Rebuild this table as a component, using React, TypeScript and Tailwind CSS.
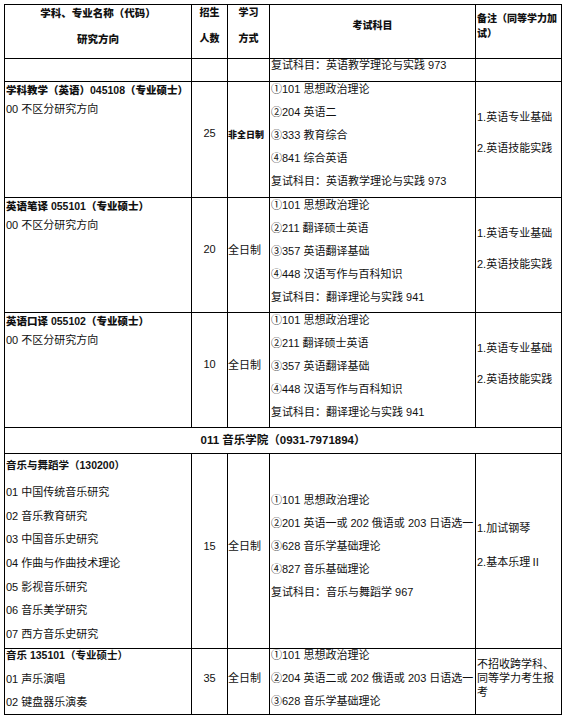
import React from 'react';

type Program = {
  title: string;
  count: string;
  mode: string;
  part: boolean;
  exams: string[];
  notes: string[];
};

const english: Program[] = [
  {
    title: '学科教学（英语）045108（专业硕士）',
    count: '25',
    mode: '非全日制',
    part: true,
    exams: ['①101 思想政治理论', '②204 英语二', '③333 教育综合', '④841 综合英语', '复试科目：英语教学理论与实践 973'],
    notes: ['1.英语专业基础', '2.英语技能实践'],
  },
  {
    title: '英语笔译 055101（专业硕士）',
    count: '20',
    mode: '全日制',
    part: false,
    exams: ['①101 思想政治理论', '②211 翻译硕士英语', '③357 英语翻译基础', '④448 汉语写作与百科知识', '复试科目：翻译理论与实践 941'],
    notes: ['1.英语专业基础', '2.英语技能实践'],
  },
  {
    title: '英语口译 055102（专业硕士）',
    count: '10',
    mode: '全日制',
    part: false,
    exams: ['①101 思想政治理论', '②211 翻译硕士英语', '③357 英语翻译基础', '④448 汉语写作与百科知识', '复试科目：翻译理论与实践 941'],
    notes: ['1.英语专业基础', '2.英语技能实践'],
  },
];

const musicDirections = [
  '01 中国传统音乐研究',
  '02 音乐教育研究',
  '03 中国音乐史研究',
  '04 作曲与作曲技术理论',
  '05 影视音乐研究',
  '06 音乐美学研究',
  '07 西方音乐史研究',
];

function ProgramRow({ p }: { p: Program }) {
  return (
    <>
      <div className="bg-white pl-[1px]">
        <div className="text-[10.5px] font-black leading-[16px] whitespace-nowrap">{p.title}</div>
        <div className="mt-[3px] text-[11px] leading-[16px]">00 不区分研究方向</div>
      </div>
      <div className="bg-white pt-[43px] text-center text-[11px] leading-[16px]">{p.count}</div>
      <div className="bg-white pt-[43px] leading-[16px] whitespace-nowrap">
        {p.part ? <span className="text-[9px] font-black">{p.mode}</span> : <span className="text-[11px]">{p.mode}</span>}
      </div>
      <div className="flex flex-col gap-[9px] bg-white pl-[1px] text-[11px] leading-[14px] whitespace-nowrap">
        {p.exams.map((e) => (
          <div key={e}>{e}</div>
        ))}
      </div>
      <div className="flex flex-col gap-[15px] bg-white pl-[1px] pt-[27px] text-[11px] leading-[16px]">
        {p.notes.map((n) => (
          <div key={n}>{n}</div>
        ))}
      </div>
    </>
  );
}

export default function App() {
  return (
    <div className="min-h-screen bg-white pl-[4px] pt-[4px] font-[family-name:Liberation_Sans,Noto_Sans_CJK_SC,sans-serif] text-[#111]">
      <div className="grid w-fit grid-cols-[186px_35px_41px_205px_85px] grid-rows-[53px_22px_115px_114px_114px_25px_194px_65px] gap-px bg-black p-px">
        {/* header */}
        <div className="flex flex-col items-center gap-[10px] bg-white text-[10.5px] font-black leading-[16px]">
          <div>学科、专业名称（代码）</div>
          <div>研究方向</div>
        </div>
        <div className="flex flex-col items-center gap-[10px] bg-white text-[10px] font-black leading-[16px]">
          <div>招生</div>
          <div>人数</div>
        </div>
        <div className="flex flex-col items-center gap-[10px] bg-white text-[10px] font-black leading-[16px]">
          <div>学习</div>
          <div>方式</div>
        </div>
        <div className="bg-white pt-[13px] text-center text-[10px] font-black leading-[16px]">考试科目</div>
        <div className="bg-white pl-[1px] pt-[6px] text-[10px] font-black leading-[15px]">
          <div>备注（同等学力加</div>
          <div>试）</div>
        </div>

        {/* continued row */}
        <div className="bg-white" />
        <div className="bg-white" />
        <div className="bg-white" />
        <div className="bg-white pl-[1px] text-[11px] leading-[12px] whitespace-nowrap">复试科目：英语教学理论与实践 973</div>
        <div className="bg-white" />

        {english.map((p) => (
          <ProgramRow key={p.title} p={p} />
        ))}

        {/* college heading */}
        <div className="col-span-5 flex items-center justify-center bg-white text-[11.5px] font-bold">
          011 音乐学院（0931-7971894）
        </div>

        {/* 音乐与舞蹈学 */}
        <div className="bg-white pl-[1px] pt-[3px]">
          <div className="text-[10.5px] font-bold leading-[16px]">音乐与舞蹈学（130200）</div>
          <div className="mt-[11px] flex flex-col gap-[7.67px] text-[11px] leading-[16px]">
            {musicDirections.map((d) => (
              <div key={d}>{d}</div>
            ))}
          </div>
        </div>
        <div className="bg-white pt-[84px] text-center text-[11px] leading-[16px]">15</div>
        <div className="bg-white pt-[84px] text-[11px] leading-[16px]">全日制</div>
        <div className="flex flex-col gap-[9px] bg-white pl-[1px] pt-[39px] text-[11px] leading-[14px] whitespace-nowrap">
          <div>①101 思想政治理论</div>
          <div>②201 英语一或 202 俄语或 203 日语选一</div>
          <div>③628 音乐学基础理论</div>
          <div>④827 音乐基础理论</div>
          <div>复试科目：音乐与舞蹈学 967</div>
        </div>
        <div className="flex flex-col gap-[18px] bg-white pl-[1px] pt-[66px] text-[11px] leading-[16px]">
          <div>1.加试钢琴</div>
          <div>2.基本乐理Ⅱ</div>
        </div>

        {/* 音乐 专业硕士 */}
        <div className="flex flex-col gap-[11.5px] bg-white pl-[1px]">
          <div className="text-[10.5px] font-bold leading-[12px]">音乐 135101（专业硕士）</div>
          <div className="text-[11px] leading-[12px]">01 声乐演唱</div>
          <div className="text-[11px] leading-[12px]">02 键盘器乐演奏</div>
        </div>
        <div className="bg-white pt-[21px] text-center text-[11px] leading-[16px]">35</div>
        <div className="bg-white pt-[21px] text-[11px] leading-[16px]">全日制</div>
        <div className="flex flex-col gap-[11px] bg-white pl-[1px] text-[11px] leading-[12px] whitespace-nowrap">
          <div>①101 思想政治理论</div>
          <div>②204 英语二或 202 俄语或 203 日语选一</div>
          <div>③628 音乐学基础理论</div>
        </div>
        <div className="bg-white pl-[1px] pt-[8px] text-[11px] leading-[14px]">
          <div>不招收跨学科、</div>
          <div>同等学力考生报</div>
          <div>考</div>
        </div>
      </div>
    </div>
  );
}
